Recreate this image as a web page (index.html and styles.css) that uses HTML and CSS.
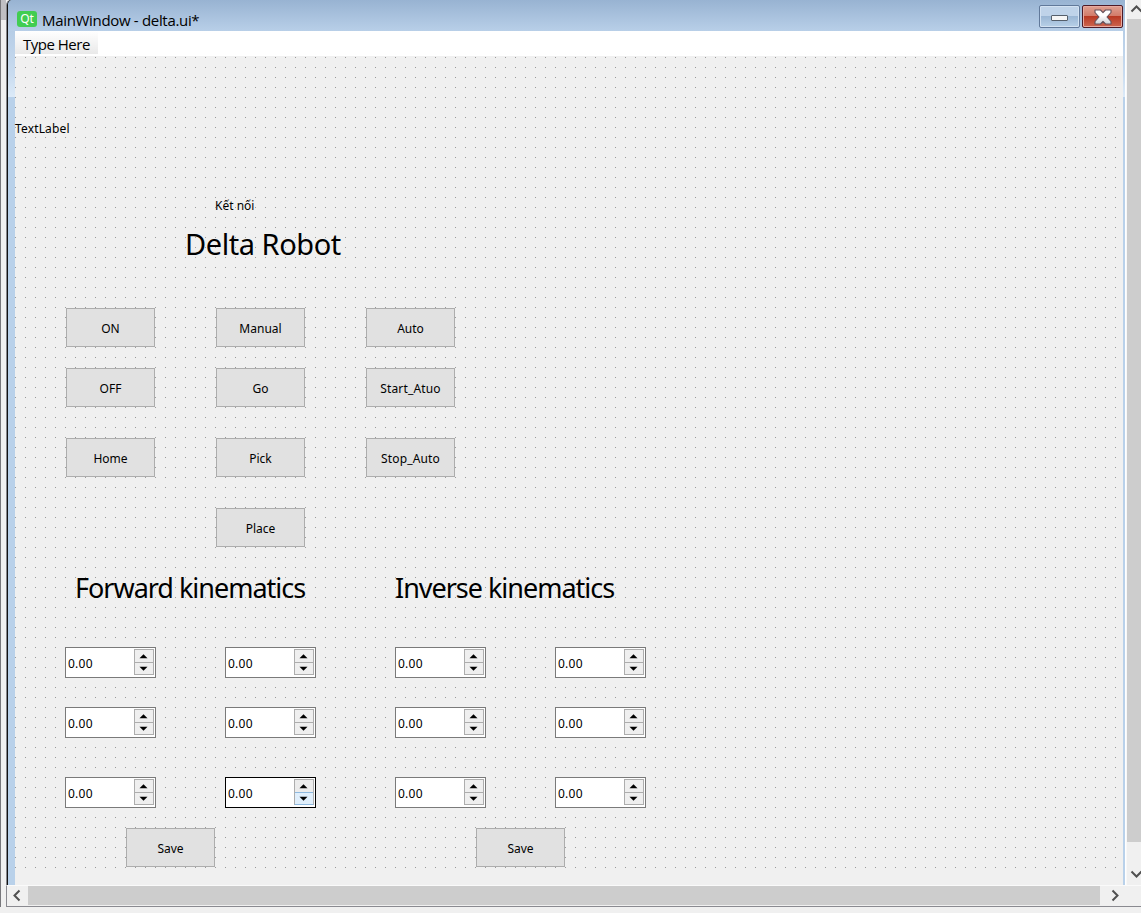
FILE: index.html
```html
<!DOCTYPE html>
<html lang="en">
<head>
<meta charset="utf-8">
<title>MainWindow - delta.ui*</title>
<link rel="stylesheet" href="styles.css">
</head>
<body>
<svg class="defs" width="0" height="0">
  <defs>
    <linearGradient id="cross" x1="0" y1="0" x2="0" y2="1"><stop offset=".4" stop-color="#fff"/><stop offset="1" stop-color="#ccd0d6"/></linearGradient>
    <symbol id="steps" viewBox="0 0 20 26">
      <path d="M5.5 9.2L9.5 5.2L13.5 9.2Z M5.5 17.8L9.5 21.8L13.5 17.8Z" fill="#000"/>
    </symbol>
  </defs>
</svg>
<div class="workspace">
  <div class="edge"></div>
  <div class="view">
    <div class="window">
      <header class="titlebar">
        <span class="qt">Qt</span>
        <h1 class="title">MainWindow - delta.ui*</h1>
        <span class="minimize"><i></i></span>
        <span class="close"><svg width="20" height="16" viewBox="0 0 20 16"><path d="M2 1H7.5L10 3.6L12.5 1H18V3.5L14 8L18 12.5V15H12.5L10 12.4L7.5 15H2V12.5L6 8L2 3.5Z" fill="url(#cross)" stroke="#64505a" stroke-width="1.1" stroke-linejoin="round"/></svg></span>
      </header>
      <div class="inner">
        <nav class="menubar"><span class="menu">Type Here</span></nav>
        <main class="form">
          <p class="label first">TextLabel</p>
          <p class="label second">Kết nối</p>
          <h2 class="heading robot">Delta Robot</h2>
          <section class="buttons">
            <button>ON</button><button>Manual</button><button>Auto</button>
            <button>OFF</button><button>Go</button><button class="wide">Start_Atuo</button>
            <button>Home</button><button>Pick</button><button class="wide">Stop_Auto</button>
            <button class="place">Place</button>
          </section>
          <section class="kinematics">
            <div class="group">
              <h2 class="heading forward">Forward kinematics</h2>
              <div class="spins">
                <div class="spin"><span>0.00</span><div class="arrows"><svg><use href="#steps"/></svg></div></div>
                <div class="spin"><span>0.00</span><div class="arrows"><svg><use href="#steps"/></svg></div></div>
                <div class="spin"><span>0.00</span><div class="arrows"><svg><use href="#steps"/></svg></div></div>
                <div class="spin"><span>0.00</span><div class="arrows"><svg><use href="#steps"/></svg></div></div>
                <div class="spin"><span>0.00</span><div class="arrows"><svg><use href="#steps"/></svg></div></div>
                <div class="spin active"><span>0.00</span><div class="arrows"><svg><use href="#steps"/></svg></div></div>
              </div>
              <button class="save">Save</button>
            </div>
            <div class="group inverse-group">
              <h2 class="heading inverse">Inverse kinematics</h2>
              <div class="spins">
                <div class="spin"><span>0.00</span><div class="arrows"><svg><use href="#steps"/></svg></div></div>
                <div class="spin"><span>0.00</span><div class="arrows"><svg><use href="#steps"/></svg></div></div>
                <div class="spin"><span>0.00</span><div class="arrows"><svg><use href="#steps"/></svg></div></div>
                <div class="spin"><span>0.00</span><div class="arrows"><svg><use href="#steps"/></svg></div></div>
                <div class="spin"><span>0.00</span><div class="arrows"><svg><use href="#steps"/></svg></div></div>
                <div class="spin"><span>0.00</span><div class="arrows"><svg><use href="#steps"/></svg></div></div>
              </div>
              <button class="save">Save</button>
            </div>
          </section>
        </main>
      </div>
    </div>
    <div class="vscroll">
      <svg width="15" height="19"><path d="M4.5 11.5L9.5 6.5L14.5 11.5" class="chev"/></svg>
      <div class="vthumb"></div>
      <svg width="15" height="43"><path d="M4.5 29.5L9.5 34.5L14.5 29.5" class="chev"/></svg>
    </div>
    <div class="hscroll">
      <svg width="21" height="19"><path d="M12.5 4.5L7.5 9.5L12.5 14.5" class="chev"/></svg>
      <div class="hthumb"></div>
      <svg width="35" height="19"><path d="M12.5 4.5L17.5 9.5L12.5 14.5" class="chev"/></svg>
    </div>
  </div>
</div>
</body>
</html>
```
FILE: styles.css
```css
* { box-sizing: border-box; }
body { margin: 0; width: 1141px; height: 913px; overflow: hidden; background: #f0f0f0; font: 12px/16px "Noto Sans", sans-serif; color: #000; }
h1, h2, p { margin: 0; font-weight: 400; }
.defs { display: block; }
.workspace { display: flex; height: 907px; }
.edge { width: 6px; border-left: 1px solid #77777b; background: linear-gradient(#bfbfc3 0 20px, #f0f0f0 20px 49px, transparent 49px); }
.view { display: grid; grid-template-columns: 1120px 15px; grid-template-rows: 885px 21px; border-bottom: 1px solid #8a8a90; height: 907px; width: 1135px; }
.window { border-left: 1px solid #85858a; border-right: 1px solid #fff; box-shadow: inset 1px 0 #111; background: linear-gradient(#9bb6d4 0, #b6cde6 31px, #c9dcf0 75px, #dceaf8 97px, #b9d1ea 97px); padding-left: 1px; height: 885px; border-top-left-radius: 5px; }
.titlebar { height: 31px; display: flex; padding: 5px 2px 0 9px; background: linear-gradient(#98b3d2, #b8cfe8); border-top-left-radius: 5px; }
.qt { width: 20px; height: 16px; margin-top: 6px; border-radius: 3px; background: #41cd52; color: #fff; font-size: 12px; line-height: 15px; text-align: center; }
.title { margin-left: 5px; font: 15px/30px "Open Sans", sans-serif; flex: 1; white-space: nowrap; letter-spacing: -.32px; }
.minimize, .close { width: 41px; height: 23px; border-radius: 2px; display: flex; align-items: center; justify-content: center; box-shadow: inset 0 0 0 1px #d3e2f2; }
.minimize { border: 1px solid #61799a; background: linear-gradient(#bfd3e9 48%, #9ab6d4 48%, #b8d1e8); margin-right: 2px; }
.minimize i { width: 17px; height: 6px; border: 1px solid #555f6b; border-radius: 1px; background: #f5f5f5; margin-top: 3px; }
.close { border: 1px solid #4e1a26; background: linear-gradient(#dfa091, #d27a69 48%, #b83722 48%, #cd6650); box-shadow: inset 0 0 0 1px #e8aaa0; }
.inner { margin: 0 2px 0 7px; height: 854px; background: #f0f0f0; }
.menubar { height: 25px; background: #fff; display: flex; }
.menu { width: 83px; height: 23px; padding-left: 8px; background: linear-gradient(#fff, #e9e9e9); font: 15px/27px "Open Sans", sans-serif; letter-spacing: -.5px; white-space: nowrap; }
.form { height: 815px; padding-top: 65px; background: radial-gradient(circle at .5px .5px, #999 0 .6px, transparent .61px) 0 1px / 10px 10px; }
.label { height: 16px; white-space: nowrap; }
.first { letter-spacing: .15px; }
.second { margin: 61px 0 0 200px; }
.heading { white-space: nowrap; line-height: 40px; height: 40px; }
.robot { margin: 10px 0 0 170px; font-size: 29px; letter-spacing: -.45px; }
.buttons { display: grid; grid-template-columns: repeat(3, 89px); grid-template-rows: 60px 70px 70px 39px; column-gap: 61px; margin: 44px 0 0 51px; }
button { width: 89px; height: 39px; border: 1px solid #adadad; background: #e1e1e1; padding: 3px 0 0; font: 12px/16px "Noto Sans", sans-serif; color: #000; }
.wide { letter-spacing: .15px; }
.place { grid-column: 2; }
.kinematics { display: flex; gap: 79px; margin: 21px 0 0 50px; }
.group { width: 251px; }
.forward, .inverse { font-size: 27px; letter-spacing: -1.02px; }
.forward { margin-left: 10px; }
.spins { display: grid; grid-template-columns: 91px 91px; column-gap: 69px; grid-template-rows: 60px 70px 31px; margin-top: 39px; }
.spin { width: 91px; height: 31px; background: #fff; border: 1px solid #7a7a7a; display: flex; justify-content: space-between; padding: 1px 1px 1px 2px; line-height: 29px; letter-spacing: .25px; }
.arrows { width: 20px; height: 26px; border: 1px solid #adadad; background: linear-gradient(#efefef 12px, #adadad 12px 13px, #efefef 13px); }
.arrows svg { display: block; width: 20px; height: 26px; margin: -1px; }
.active { border-color: #000; }
.active .arrows { background: linear-gradient(#ececec 12px, #8eb9df 12px 13px, #e0effc 13px); border-bottom-color: #8eb9df; }
.save { display: block; margin: 20px 0 0 61px; }
.inverse-group .save { margin-left: 81px; }
.vscroll { background: #f0f0f0; border-left: 1px solid #f8f8f8; width: 15px; overflow: hidden; }
.vscroll svg, .hscroll svg { display: block; flex: none; }
.vthumb { height: 823px; background: #cdcdcd; }
.hscroll { grid-column: 1 / 3; display: flex; background: #f0f0f0; border-top: 1px solid #fafafa; border-left: 1px solid #8a8a90; }
.hthumb { height: 19px; width: 1072px; background: #cdcdcd; }
.chev { fill: none; stroke: #505050; stroke-width: 2; }
```
